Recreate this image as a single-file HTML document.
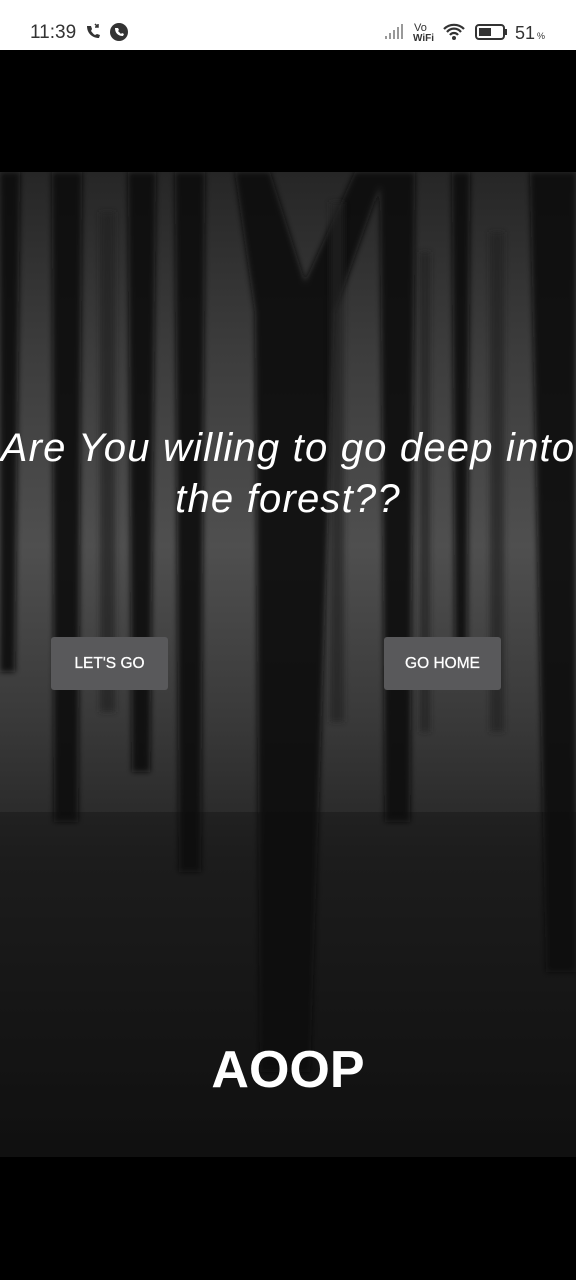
<!DOCTYPE html>
<html><head><meta charset="utf-8"><style>
*{margin:0;padding:0;box-sizing:border-box}
body{width:576px;height:1280px;background:#000;position:relative;overflow:hidden;font-family:"Liberation Sans",sans-serif}
.sb{position:absolute;top:0;left:0;width:576px;height:50px;background:#fff;color:#333}
.t{position:absolute;top:22px;left:30px;font-size:19px}
.bg{position:absolute;top:172px;left:0;width:576px;height:985px}
.q{position:absolute;top:423px;left:-4px;width:584px;text-align:center;color:#fff;font-style:italic;font-size:40px;letter-spacing:1.2px;line-height:51px;white-space:nowrap}
.btn{position:absolute;top:637px;width:117px;height:53px;background:#59595b;border-radius:3px;color:#fff;font-size:15.5px;text-align:center;line-height:54px;-webkit-text-stroke:0.3px #fff}
.a{position:absolute;top:1040px;left:0;width:576px;text-align:center;color:#fff;font-weight:bold;font-size:52px}
</style></head><body>
<div class="sb">
<div class="t">11:39</div>
<svg style="position:absolute;left:84px;top:22px" width="48" height="20" viewBox="0 0 48 20">
<path d="M3 4c0 7 5 12 12 12l1-3-3-1-2 1c-2-1-3-3-4-4l1-2-1-3z" fill="#333"/>
<path d="M11 2l3 3M14 2v3h-3" stroke="#333" stroke-width="1.5" fill="none"/>
<circle cx="35" cy="10" r="9" fill="#333"/>
<path d="M31 6c0 5 3 8 8 8l1-2-2-1-1 1c-1-1-2-2-3-3l1-1-1-2z" fill="#fff"/>
</svg>
<svg style="position:absolute;left:384px;top:20px" width="170" height="24" viewBox="0 0 170 24">
<rect x="1" y="16" width="2" height="3" fill="#999"/><rect x="5" y="13" width="2" height="6" fill="#999"/><rect x="9" y="10" width="2" height="9" fill="#999"/><rect x="13" y="7" width="2" height="12" fill="#999"/><rect x="17" y="4" width="2" height="15" fill="#999"/>
<text x="30" y="11" font-size="11" fill="#333" font-family="Liberation Sans">Vo</text>
<text x="29" y="21" font-size="10" fill="#333" font-family="Liberation Sans" font-weight="bold">WiFi</text>
<path d="M60 9a14 14 0 0 1 20 0M63 12a9 9 0 0 1 14 0M66 15a5 5 0 0 1 8 0" stroke="#333" stroke-width="2.2" fill="none"/><circle cx="70" cy="18" r="2" fill="#333"/>
<rect x="92" y="5" width="28" height="14" rx="3" stroke="#333" stroke-width="2" fill="none"/><rect x="95" y="8" width="12" height="8" fill="#333"/><rect x="121" y="9" width="2" height="6" fill="#333"/>
<text x="131" y="19" font-size="18" fill="#333" font-family="Liberation Sans">51</text><text x="153" y="19" font-size="9" fill="#333" font-family="Liberation Sans">%</text>
</svg>
</div>
<svg class="bg" viewBox="0 0 576 985" preserveAspectRatio="none">
<defs><linearGradient id="g" x1="0" y1="0" x2="0" y2="1">
<stop offset="0" stop-color="#262626"/><stop offset="0.18" stop-color="#3c3c3c"/><stop offset="0.38" stop-color="#4f4f4f"/><stop offset="0.55" stop-color="#3a3a3a"/><stop offset="0.7" stop-color="#242424"/><stop offset="1" stop-color="#111"/></linearGradient>
<filter id="b"><feGaussianBlur stdDeviation="3"/></filter></defs>
<rect width="576" height="985" fill="url(#g)"/>
<g fill="#111" filter="url(#b)" opacity="0.9">
<path d="M52 0h30l-4 650h-24z"/>
<path d="M128 0h28l-6 600h-18z"/>
<path d="M175 0h30l-4 700h-22z"/>
<path d="M235 0h35l35 110 50-110h30l-50 140-25 760h-50l-5-760z"/>
<path d="M380 0h35l-5 650h-25z"/>
<path d="M452 0h18l-3 500h-12z"/>
<path d="M530 0h46v800h-30z"/>
<path d="M0 0h20l-5 500h-15z"/>
</g>
<g fill="#222" opacity="0.7" filter="url(#b)">
<path d="M100 40h15v500h-15z"/><path d="M330 30h14v520h-14z"/><path d="M490 60h14v500h-14z"/><path d="M420 80h10v480h-10z"/>
</g>
<rect y="640" width="576" height="345" fill="#0e0e0e" opacity="0.35"/>
</svg>
<div class="q">Are You willing to go deep into<br>the forest??</div>
<div class="btn" style="left:51px">LET'S GO</div>
<div class="btn" style="left:384px">GO HOME</div>
<div class="a">AOOP</div>
</body></html>
